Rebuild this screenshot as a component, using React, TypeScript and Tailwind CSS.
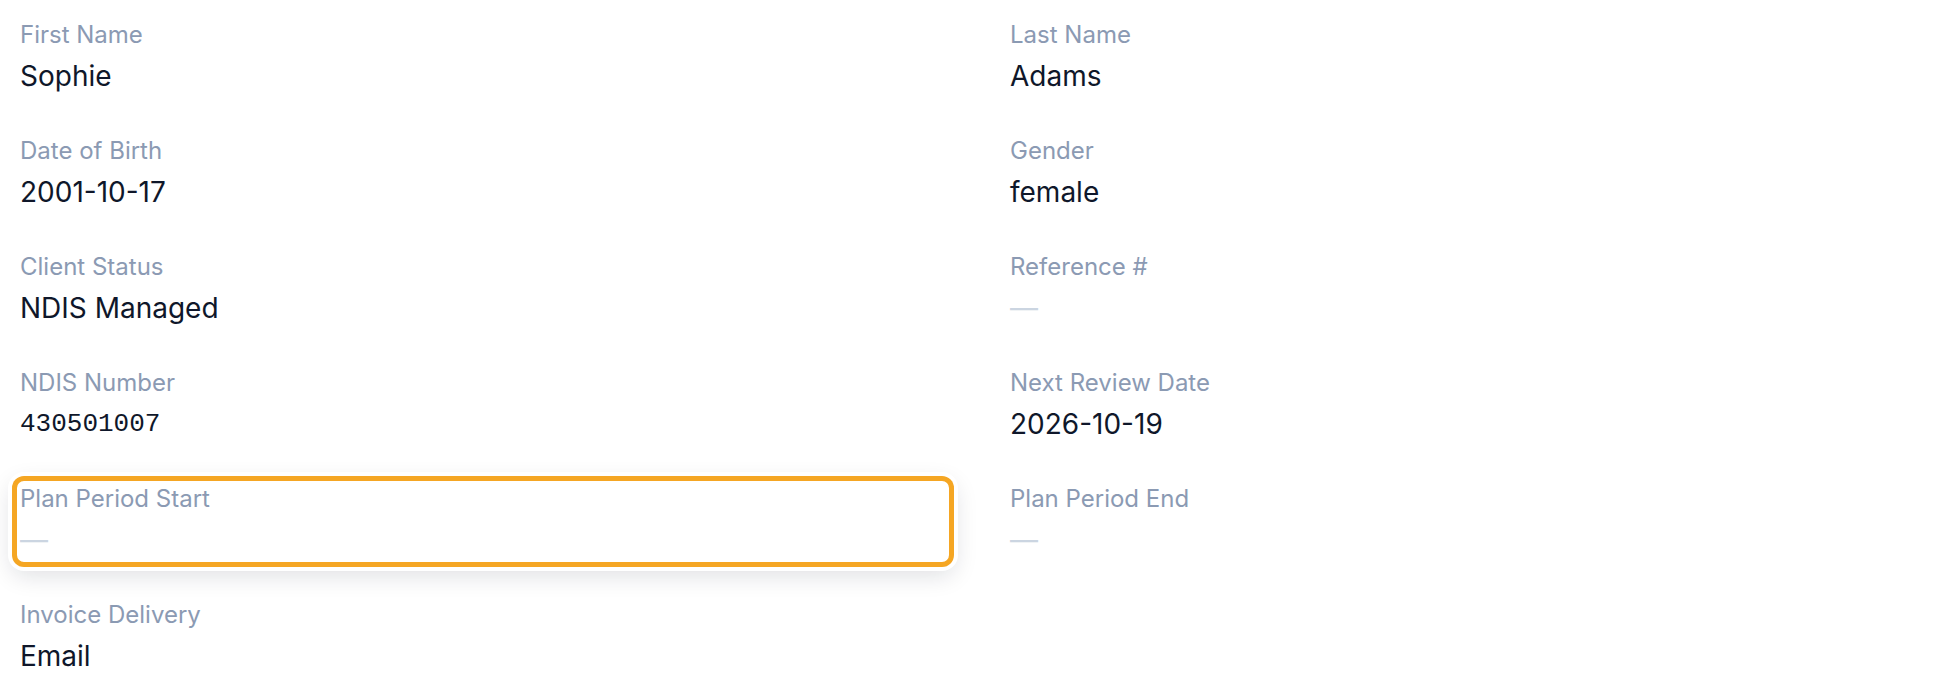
import React from 'react';

interface Field {
  label: string;
  value?: string;
  mono?: boolean;
  highlight?: boolean;
}

const fields: Field[] = [
  { label: 'First Name', value: 'Sophie' },
  { label: 'Last Name', value: 'Adams' },
  { label: 'Date of Birth', value: '2001-10-17' },
  { label: 'Gender', value: 'female' },
  { label: 'Client Status', value: 'NDIS Managed' },
  { label: 'Reference #' },
  { label: 'NDIS Number', value: '430501007', mono: true },
  { label: 'Next Review Date', value: '2026-10-19' },
  { label: 'Plan Period Start', highlight: true },
  { label: 'Plan Period End' },
  { label: 'Invoice Delivery', value: 'Email' },
];

const App: React.FC = () => {
  return (
    <div className="min-h-screen bg-white px-3 pt-3 font-['Inter',sans-serif]">
      <div className="grid grid-cols-2 gap-x-12 gap-y-[25px]">
        {fields.map((f) => (
          <div
            key={f.label}
            className={
              f.highlight
                ? 'rounded-xl px-2 pt-[9px] pb-[7px] shadow-[inset_0_0_0_5px_#f5a623,0_0_0_4px_#ffffff,0_8px_24px_rgba(15,23,42,0.14)]'
                : 'px-2 pt-[9px] pb-[7px]'
            }
          >
            <div className="text-[24px] leading-[28px] text-[#8b9ab3]">{f.label}</div>
            <div className="mt-[7px] h-10">
              {f.value ? (
                <span
                  className={
                    f.mono
                      ? "font-['Liberation_Mono',monospace] text-[26px] leading-[40px] text-[#0f172a]"
                      : 'text-[28px] leading-[40px] text-[#0f172a]'
                  }
                >
                  {f.value}
                </span>
              ) : (
                <span className="text-[28px] leading-[40px] text-[#cbd5e1]">—</span>
              )}
            </div>
          </div>
        ))}
      </div>
    </div>
  );
};

export default App;
